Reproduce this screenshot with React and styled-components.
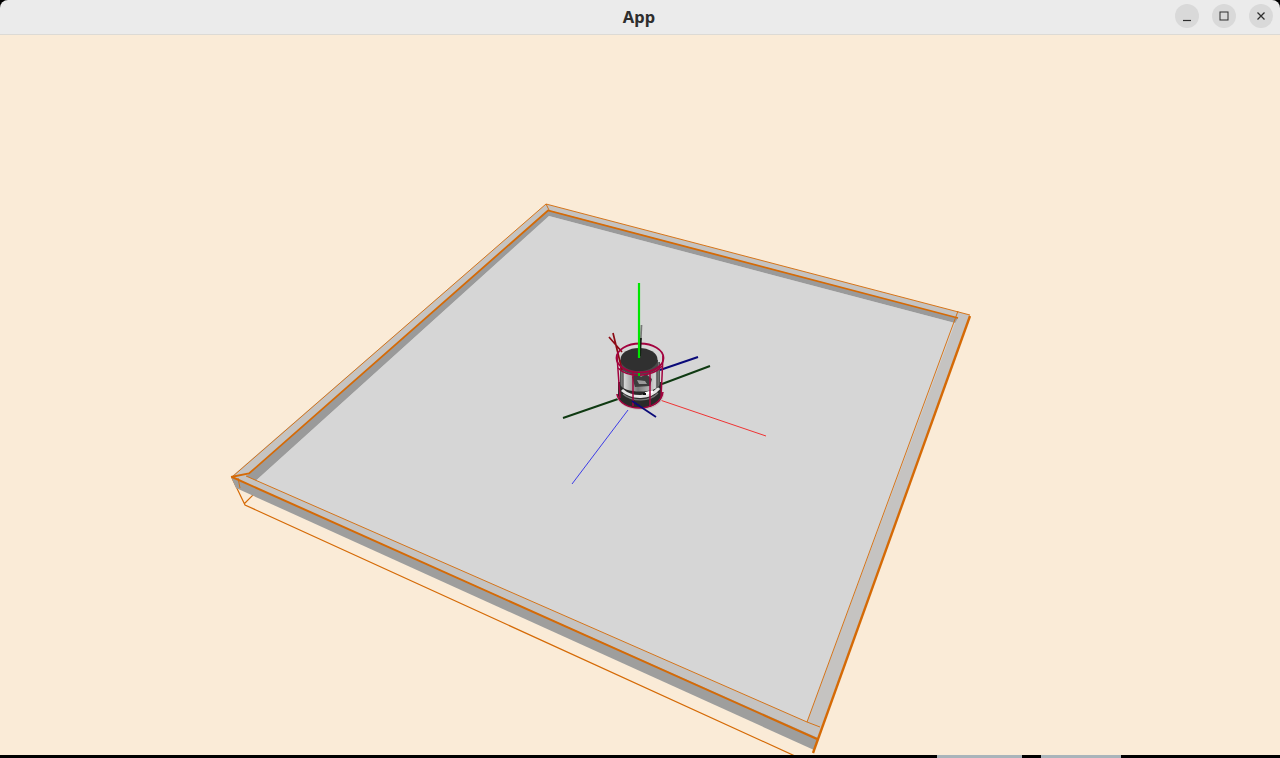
import React from "react";
import styled, { createGlobalStyle } from "styled-components";

const Global = createGlobalStyle`
  html, body { margin: 0; padding: 0; height: 100%; background: #000; overflow: hidden; }
  #root { height: 100%; }
`;
const Frame = styled.div`
  width: 1280px; height: 758px; display: flex; flex-direction: column; background: #000;
`;
const TitleBar = styled.header`
  box-sizing: border-box; height: 35px; flex: none; display: grid; grid-template-columns: 1fr auto 1fr; align-items: center;
  background: #ebebeb; border-bottom: 1px solid #dcdad5; border-radius: 8px 8px 0 0;
`;
const Title = styled.h1`
  grid-column: 2; margin: 0; font: 700 16.5px "Noto Sans", "Open Sans", sans-serif; color: #2e2e2e;
  position: relative; top: -1px; left: -1px;
`;
const Controls = styled.div`
  grid-column: 3; justify-self: end; display: flex; gap: 13px; padding-right: 7px; margin-top: -2px;
`;
const WinButton = styled.button`
  width: 24px; height: 24px; border: 0; padding: 0; border-radius: 50%; background: #d9d9d9;
  display: flex; align-items: center; justify-content: center; color: #2e2e2e;
`;
const Viewport = styled.main`
  flex: 1; min-height: 0; background: #faebd7;
`;
const Scene = styled.svg`
  display: block; width: 1280px; height: 720px;
`;
const Strip = styled.footer`
  height: 3px; flex: none; display: flex; background: #000; padding-left: 937px;
`;
const StripSegment = styled.span`
  height: 100%; width: ${p => p.$w}px; margin-right: ${p => p.$gap}px; background: #a9b4ba;
`;

const O = "#d56a06";

const Robot = () => (
  <g>
    <defs>
      <linearGradient id="metal" x1="0" x2="1" y1="0" y2="0">
        <stop offset="0" stopColor="#3a3a3a" />
        <stop offset="0.1" stopColor="#d8d8d8" />
        <stop offset="0.28" stopColor="#a8a8a8" />
        <stop offset="0.45" stopColor="#7a7a7a" />
        <stop offset="0.68" stopColor="#aaaaaa" />
        <stop offset="0.88" stopColor="#d4d4d4" />
        <stop offset="1" stopColor="#444" />
      </linearGradient>
    </defs>
    {/* long axes */}
    <path d="M660 400L766 436" stroke="#f02020" strokeWidth="0.9" fill="none" />
    <path d="M628 410L572 484" stroke="#2a2ae8" strokeWidth="0.9" fill="none" />
    <path d="M563 418L618 399M662 384L710 366" stroke="#0f3a12" strokeWidth="1.9" fill="none" />
    <path d="M660 370L698 357" stroke="#0a0a78" strokeWidth="1.9" fill="none" />
    {/* base */}
    <path d="M616 394C618 415 662 415 664 394Z" fill="#c9b9bd" />
    <path d="M618 382V396C620 412 660 412 662 396V382Z" fill="#2a2a2a" />
    <path d="M622 390C632 399 650 399 659 388" stroke="#e6e6e6" strokeWidth="3" fill="none" />
    <path d="M623 394C632 402 650 402 658 393" stroke="#777" strokeWidth="1.2" fill="none" />
    <rect x="645" y="391" width="8" height="3" fill="#fff" transform="rotate(-16 649 392)" />
    <rect x="643" y="393" width="3" height="2" fill="#111" />
    {/* body */}
    <path d="M620 362V384C622 394 658 394 660 384V362Z" fill="url(#metal)" />
    <path d="M632 377L635 387L650 386L652 379L646 374L641 377L636 373Z" fill="#3d3d3d" />
    <path d="M637 380L645 381L647 384L639 384Z" fill="#9a9a9a" />
    <path d="M623 366V388M657 366V388" stroke="#333" strokeWidth="1" />
    {/* top disc */}
    <path d="M620 360V366C622 378 656 378 658 366V360Z" fill="#4a4a4a" />
    <ellipse cx="639" cy="359.5" rx="18.5" ry="11.5" fill="#303030" />
    {/* dark red sensor */}
    <path d="M613 333L622 370M609 337L622 352" stroke="#8c0a14" strokeWidth="1.7" fill="none" />
    {/* cage */}
    <g stroke="#a3033f" fill="none" strokeWidth="1.8">
      <ellipse cx="640" cy="358" rx="23.5" ry="14.5" />
      <path d="M618 368C628 378 652 378 662 366" strokeWidth="1.6" />
      <path d="M617 394C620 413 660 413 663 392" strokeWidth="1.6" />
      <path d="M617 356L620 398M663 356L661 398M633 372L633 406M650 372L650 407" strokeWidth="1.5" />
    </g>
    {/* upper axes */}
    <path d="M632 401L656 417" stroke="#0a0a78" strokeWidth="1.9" fill="none" />
    <path d="M641.5 325L640.8 340" stroke="#777" strokeWidth="1.7" fill="none" />
    <path d="M640.8 338L640 356" stroke="#111" strokeWidth="2" fill="none" />
    <path d="M639 283V358" stroke="#00e600" strokeWidth="2.2" fill="none" />
    <path d="M639 373V376" stroke="#00c800" strokeWidth="2" fill="none" />
  </g>
);

const Room = () => (
  <g>
    {/* wireframe below */}
    <path d="M232 478L245 505L795 756M244 504L257 491" stroke={O} strokeWidth="1.2" fill="none" />
    {/* wall tops */}
    <path d="M231 477L546 204L970 315L817 740Z" fill="#c5c3c1" />
    {/* front face */}
    <path d="M231 477L236 488L814 750L818 738Z" fill="#9e9e9d" />
    {/* back inner faces */}
    <path d="M249 474L548 210L958 318L955 323L549 216L256 480.4L246 476Z" fill="#9a9a9a" />
    {/* floor */}
    <path d="M256 480.4L549 216L955 323L807 722Z" fill="#d6d6d6" />
    {/* edges */}
    <path d="M231 477L249 473.5L548 210.5L958 318" stroke={O} strokeWidth="1.8" fill="none" />
    <path d="M970 316L813 753" stroke={O} strokeWidth="2.4" fill="none" />
    <path d="M232 477L817 739" stroke={O} strokeWidth="2" fill="none" />
    <path d="M232 477L546 204L970 315" stroke={O} strokeWidth="0.9" fill="none" />
    <path d="M958 311L807 722L820 727M807 722L246 476M238 478L240 488" stroke={O} strokeWidth="0.9" fill="none" />
    <path d="M546 204L549 210" stroke={O} strokeWidth="0.9" fill="none" />
  </g>
);

export default function App() {
  return (
    <Frame>
      <Global />
      <TitleBar>
        <Title>App</Title>
        <Controls>
          <WinButton aria-label="minimize">
            <svg width="12" height="12" viewBox="0 0 12 12"><path d="M2 10.5H10" stroke="currentColor" strokeWidth="1.2" /></svg>
          </WinButton>
          <WinButton aria-label="maximize">
            <svg width="12" height="12" viewBox="0 0 12 12"><rect x="2" y="2" width="8" height="8" fill="none" stroke="currentColor" strokeWidth="1" /></svg>
          </WinButton>
          <WinButton aria-label="close">
            <svg width="12" height="12" viewBox="0 0 12 12"><path d="M2.5 2.5L9.5 9.5M9.5 2.5L2.5 9.5" stroke="currentColor" strokeWidth="1.3" /></svg>
          </WinButton>
        </Controls>
      </TitleBar>
      <Viewport>
        <Scene viewBox="0 35 1280 720">
          <Room />
          <Robot />
        </Scene>
      </Viewport>
      <Strip>
        <StripSegment $w={85} $gap={19} />
        <StripSegment $w={80} $gap={0} />
      </Strip>
    </Frame>
  );
}
